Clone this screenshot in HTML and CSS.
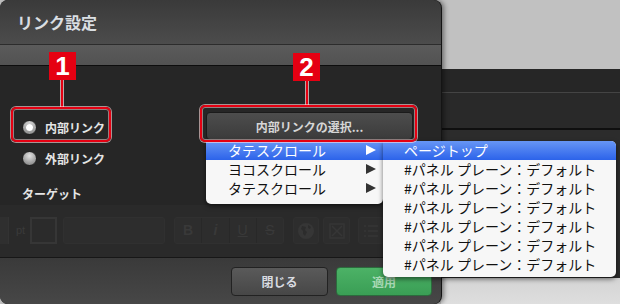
FILE: index.html
```html
<!DOCTYPE html>
<html lang="ja">
<head>
  <meta charset="UTF-8">
  <title>リンク設定</title>
  <link rel="stylesheet" href="styles.css">
</head>
<body>
  <div class="screen">
    <div class="dialog">
      <div class="dialog-title">リンク設定</div>
      <div class="dialog-tabs"></div>
      <div class="dialog-body">
        <div class="options">
          <label class="radio checked"><span class="radio-dot"></span>内部リンク</label>
          <label class="radio"><span class="radio-dot"></span>外部リンク</label>
          <div class="target-label">ターゲット</div>
        </div>
        <div class="picker">
          <button class="picker-btn">内部リンクの選択...</button>
        </div>
      </div>
      <div class="toolbar">
        <div class="tb-stepper"></div>
        <div class="tb-unit">pt</div>
        <div class="tb-swatch"></div>
        <div class="tb-select"></div>
        <div class="tb-group">
          <span class="tb-cell b">B</span>
          <span class="tb-cell i">i</span>
          <span class="tb-cell u">U</span>
          <span class="tb-cell s">S</span>
        </div>
        <div class="tb-btn globe">
          <svg width="18" height="18" viewBox="0 0 18 18"><circle cx="9" cy="9" r="8" fill="#363636"/><path d="M5 4 L9 5 L8 8 L10 10 L8 14 L6 12 L6 9 L4 7 Z M11 3 L14 5 L13 7 L11 6 Z" fill="#2c2c2c"/></svg>
        </div>
        <div class="tb-btn xbox">
          <svg width="16" height="16" viewBox="0 0 16 16"><rect x="1" y="1" width="14" height="14" fill="none" stroke="#363636" stroke-width="1.5"/><path d="M3 3 L13 13 M13 3 L3 13" stroke="#363636" stroke-width="1.5"/></svg>
        </div>
        <div class="tb-btn list">
          <svg width="18" height="16" viewBox="0 0 18 16"><path d="M2 3h2M2 8h2M2 13h2M6 3h10M6 8h10M6 13h10" stroke="#363636" stroke-width="1.5"/></svg>
        </div>
      </div>
      <div class="dialog-footer">
        <button class="btn">閉じる</button>
        <button class="btn btn-apply">適用</button>
      </div>
    </div>

    <div class="backdrop">
      <div class="bd-top"></div>
      <div class="bd-bar"></div>
      <div class="bd-bar2"></div>
      <div class="bd-panel"></div>
      <div class="bd-bottom"></div>
    </div>

    <ul class="menu menu-main">
      <li class="active">タテスクロール<span class="arrow"></span></li>
      <li>ヨコスクロール<span class="arrow"></span></li>
      <li>タテスクロール<span class="arrow"></span></li>
    </ul>

    <ul class="menu menu-sub">
      <li class="active">ページトップ</li>
      <li>#パネル プレーン：デフォルト</li>
      <li>#パネル プレーン：デフォルト</li>
      <li>#パネル プレーン：デフォルト</li>
      <li>#パネル プレーン：デフォルト</li>
      <li>#パネル プレーン：デフォルト</li>
      <li>#パネル プレーン：デフォルト</li>
    </ul>

    <div class="badge badge-1">1</div>
    <div class="leader leader-1"></div>
    <div class="callout callout-1"></div>

    <div class="badge badge-2">2</div>
    <div class="leader leader-2"></div>
    <div class="callout callout-2"></div>
  </div>
</body>
</html>
```

FILE: styles.css
```css
body {
  margin: 0;
  font-family: "Noto Sans CJK JP", "Noto Sans", sans-serif;
}

.screen {
  position: relative;
  width: 620px;
  height: 304px;
  display: flex;
  overflow: hidden;
  background: #c1c1c1;
}

/* dialog */

.dialog {
  position: relative;
  z-index: 1;
  width: 441px;
  height: 304px;
  flex: none;
  display: flex;
  flex-direction: column;
  border-radius: 8px;
  overflow: hidden;
  background: #262626;
  box-shadow: 1px 0 0 #141414, 3px 0 5px rgba(0, 0, 0, 0.45);
}

.dialog-title {
  height: 44px;
  padding-left: 17px;
  line-height: 44px;
  font-size: 16px;
  font-weight: bold;
  color: #d9dee2;
  background: linear-gradient(#3a3a3a, #4c4c4c);
  border-bottom: 1px solid #2c2c2c;
}

.dialog-tabs {
  height: 20px;
  background: linear-gradient(#5b5b5b, #525252);
  border-bottom: 1px solid #0d0d0d;
}

.dialog-body {
  height: 139px;
  display: flex;
  align-items: flex-start;
  background: #262626;
}

.options {
  width: 206px;
  box-sizing: border-box;
  padding: 51px 0 0 22px;
  display: flex;
  flex-direction: column;
  font-size: 12px;
  font-weight: bold;
  color: #e4e4e4;
}

.radio {
  display: flex;
  align-items: center;
  gap: 8px;
  height: 20px;
  margin-bottom: 11px;
}

.radio-dot {
  flex: none;
  width: 15px;
  height: 15px;
  box-sizing: border-box;
  border-radius: 50%;
  border: 1px solid #222;
  background: radial-gradient(circle at 50% 30%, #e2e2e2, #a6a6a6 55%, #7a7a7a);
  display: flex;
  align-items: center;
  justify-content: center;
}

.radio.checked .radio-dot::after {
  content: "";
  width: 7px;
  height: 7px;
  border-radius: 50%;
  background: #fff;
  box-shadow: 0 0 1px rgba(0, 0, 0, 0.4);
}

.target-label {
  margin-top: 5px;
  line-height: 20px;
}

.picker {
  padding-top: 46px;
}

.picker-btn {
  width: 207px;
  height: 28px;
  border: 1px solid #1b1b1b;
  border-radius: 4px;
  background: linear-gradient(#4d4d4d, #3b3b3b);
  color: #d6d6d6;
  font-family: inherit;
  font-size: 12px;
  font-weight: bold;
  padding: 0;
}

/* faded toolbar behind the dialog */

.toolbar {
  height: 53px;
  box-sizing: border-box;
  padding-top: 12px;
  display: flex;
  align-items: flex-start;
  background: #2a2a2a;
  border-bottom: 1px solid #171717;
}

.toolbar > div {
  height: 27px;
  box-sizing: border-box;
  flex: none;
}

.tb-stepper {
  width: 9px;
  background: #2f2f2f;
  border-right: 1px solid #333;
}

.tb-unit {
  width: 10px;
  margin-left: 7px;
  font-family: "Liberation Sans", sans-serif;
  font-size: 11px;
  line-height: 27px;
  color: #3a3a3a;
}

.tb-swatch {
  width: 27px;
  margin-left: 4px;
  border: 2px solid #363636;
  background: #2b2b2b;
}

.tb-select {
  width: 102px;
  margin-left: 6px;
  border: 1px solid #303030;
  border-radius: 3px;
  background: #2d2d2d;
}

.tb-group {
  width: 110px;
  margin-left: 9px;
  display: flex;
  border: 1px solid #303030;
  border-radius: 3px;
  background: #2d2d2d;
}

.tb-cell {
  flex: 1;
  text-align: center;
  line-height: 25px;
  font-family: "Liberation Sans", sans-serif;
  font-size: 14px;
  color: #393939;
  border-left: 1px solid #282828;
}

.tb-cell:first-child {
  border-left: none;
}

.tb-cell.b { font-weight: bold; }
.tb-cell.i { font-style: italic; font-weight: bold; }
.tb-cell.u { text-decoration: underline; }
.tb-cell.s { text-decoration: line-through; }

.tb-btn {
  width: 26px;
  display: flex;
  align-items: center;
  justify-content: center;
  border: 1px solid #303030;
  border-radius: 3px;
  background: #2d2d2d;
}

.tb-btn.globe { margin-left: 9px; }
.tb-btn.xbox { margin-left: 4px; width: 27px; }
.tb-btn.list { margin-left: 8px; }

.dialog-footer {
  flex: 1;
  display: flex;
  justify-content: flex-end;
  align-items: flex-start;
  gap: 8px;
  padding: 9px 9px 0 0;
  background: linear-gradient(#3a3a3a, #474747);
}

.btn {
  width: 97px;
  height: 29px;
  border: 1px solid #222;
  border-radius: 4px;
  background: linear-gradient(#5a5a5a, #474747);
  color: #d8dbe0;
  font-family: inherit;
  font-size: 12px;
  font-weight: bold;
  padding: 0;
}

.btn-apply {
  width: 96px;
  border-color: #2c6b3d;
  background: linear-gradient(#4cb266, #3a9e55);
  color: #a9d9b5;
}

/* what lies behind, right of the dialog */

.backdrop {
  flex: 1;
  display: flex;
  flex-direction: column;
}

.bd-top {
  height: 69px;
  background: #c1c1c1;
}

.bd-bar {
  height: 23px;
  background: #262626;
  border-bottom: 1px solid #444;
}

.bd-bar2 {
  height: 35px;
  background: #292929;
  border-bottom: 2px solid #0f0f0f;
}

.bd-panel {
  height: 148px;
  background: #2c2c2c;
}

.bd-bottom {
  flex: 1;
  background: linear-gradient(#d4d4d4, #dedede);
}

/* popup menus */

.menu {
  position: absolute;
  z-index: 2;
  margin: 0;
  padding: 0;
  list-style: none;
  background: #f7f7f7;
  font-size: 14px;
  color: #111;
  box-shadow: 0 2px 5px rgba(0, 0, 0, 0.55);
}

.menu li {
  position: relative;
  height: 19px;
  line-height: 19px;
  white-space: nowrap;
}

.menu li.active {
  color: #fff;
  background: linear-gradient(#6796f5, #2c63ea);
}

.menu-main {
  left: 206px;
  top: 141px;
  width: 177px;
  padding-bottom: 6px;
  border-radius: 0 0 5px 5px;
}

.menu-main li {
  padding-left: 22px;
}

.arrow {
  position: absolute;
  left: 160px;
  top: 4px;
  width: 0;
  height: 0;
  border-left: 10px solid #333;
  border-top: 5.5px solid transparent;
  border-bottom: 5.5px solid transparent;
}

.menu li.active .arrow {
  border-left-color: #fff;
}

.menu-sub {
  left: 383px;
  top: 141px;
  width: 233px;
  padding-bottom: 3px;
  border-radius: 0 5px 5px 5px;
}

.menu-sub li {
  padding-left: 21px;
}

.menu-sub li.active {
  border-radius: 0 5px 0 0;
}

/* red callouts */

.badge {
  position: absolute;
  z-index: 3;
  width: 27px;
  height: 28px;
  background: #e50012;
  color: #fff;
  font-family: "Liberation Sans", sans-serif;
  font-size: 26px;
  font-weight: bold;
  line-height: 29px;
  text-align: center;
}

.badge-1 { left: 49px; top: 52px; }
.badge-2 { left: 293px; top: 53px; }

.leader {
  position: absolute;
  z-index: 3;
  width: 2px;
  background: #e50012;
  box-shadow: -1px 0 0 rgba(255, 220, 220, 0.7), 1px 0 0 rgba(255, 220, 220, 0.7);
}

.leader-1 { left: 61px; top: 80px; height: 27px; }
.leader-2 { left: 306px; top: 81px; height: 24px; }

.callout {
  position: absolute;
  z-index: 3;
  box-sizing: border-box;
  border: 2px solid #e50012;
  border-radius: 5px;
  box-shadow: 0 0 0 1px rgba(255, 220, 220, 0.6), inset 0 0 0 1px rgba(255, 220, 220, 0.5);
}

.callout-1 { left: 11px; top: 107px; width: 100px; height: 35px; }
.callout-2 { left: 200px; top: 105px; width: 217px; height: 37px; }
```
